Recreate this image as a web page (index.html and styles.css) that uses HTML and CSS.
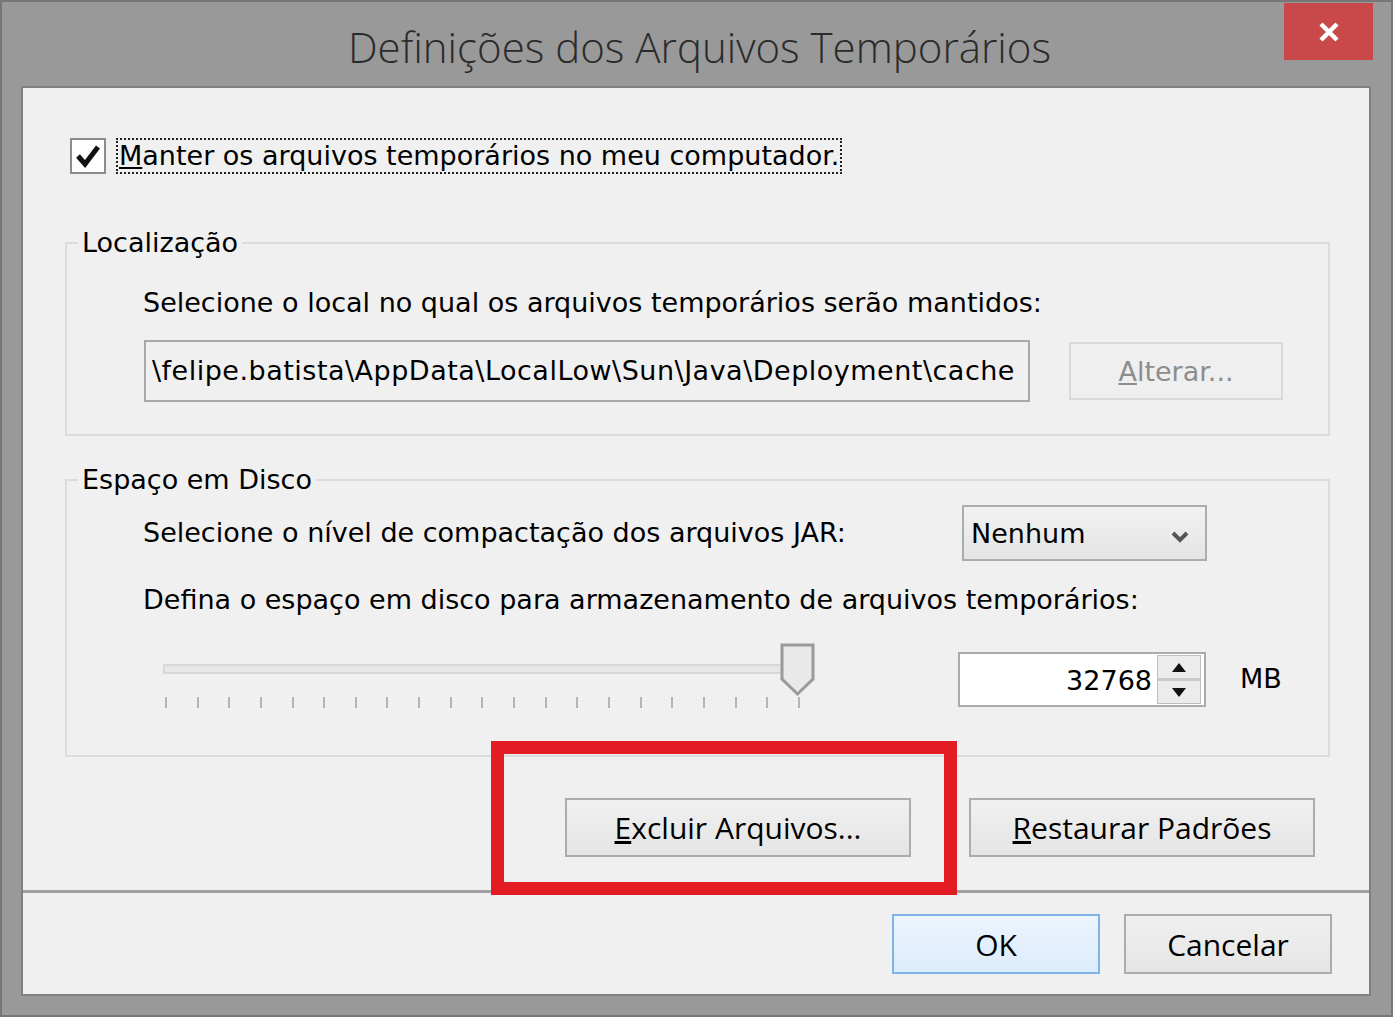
FILE: index.html
```html
<!DOCTYPE html>
<html lang="pt">
  <head>
    <meta charset="UTF-8" />
    <title>Definições dos Arquivos Temporários</title>
    <link rel="stylesheet" href="styles.css">
  </head>
  <body>
    <div class="window">
      <div class="titlebar">
        <span class="title">Definições dos Arquivos Temporários</span>
        <div class="close">
          <svg width="26" height="24" viewBox="0 0 26 24">
            <path d="M5 4 L21 20 M21 4 L5 20" stroke="#fff" stroke-width="4.5" />
          </svg>
        </div>
      </div>

      <div class="client">
        <div class="content">
          <div class="check-row">
            <span class="checkbox">
              <svg width="28" height="28" viewBox="0 0 28 28">
                <path d="M4 14 L11 22 L24 5" fill="none" stroke="#111" stroke-width="5" />
              </svg>
            </span>
            <span class="check-label"><u>M</u>anter os arquivos temporários no meu computador.</span>
          </div>

          <fieldset class="group group-location">
            <legend>Localização</legend>
            <p class="line">Selecione o local no qual os arquivos temporários serão mantidos:</p>
            <div class="path-row">
              <div class="path-box">\felipe.batista\AppData\LocalLow\Sun\Java\Deployment\cache</div>
              <div class="btn btn-disabled"><u>A</u>lterar...</div>
            </div>
          </fieldset>

          <fieldset class="group group-disk">
            <legend>Espaço em Disco</legend>
            <div class="jar-row">
              <span class="line">Selecione o nível de compactação dos arquivos JAR:</span>
              <div class="combo">
                <span>Nenhum</span>
                <svg width="22" height="16" viewBox="0 0 22 16">
                  <path d="M4 5 L11 12 L18 5" fill="none" stroke="#555" stroke-width="4" />
                </svg>
              </div>
            </div>
            <p class="line line-space">Defina o espaço em disco para armazenamento de arquivos temporários:</p>
            <div class="slider-row">
              <div class="slider">
                <div class="track"></div>
                <svg class="thumb" width="35" height="54" viewBox="0 0 35 54">
                  <path d="M2 2 H33 V36 L17.5 51 L2 36 Z" fill="#e9e9e9" stroke="#9a9a9a" stroke-width="3" />
                </svg>
                <div class="ticks">
                  <i></i><i></i><i></i><i></i><i></i><i></i><i></i>
                  <i></i><i></i><i></i><i></i><i></i><i></i><i></i>
                  <i></i><i></i><i></i><i></i><i></i><i></i><i></i>
                </div>
              </div>
              <div class="spin">
                <span class="spin-value">32768</span>
                <div class="spin-buttons">
                  <div class="spin-up">
                    <svg width="14" height="9" viewBox="0 0 14 9"><path d="M7 0 L14 9 H0 Z" fill="#111" /></svg>
                  </div>
                  <div class="spin-down">
                    <svg width="14" height="9" viewBox="0 0 14 9"><path d="M0 0 H14 L7 9 Z" fill="#111" /></svg>
                  </div>
                </div>
              </div>
              <span class="unit">MB</span>
            </div>
          </fieldset>

          <div class="action-row">
            <div class="btn btn-wide"><u>E</u>xcluir Arquivos...</div>
            <div class="btn btn-wide"><u>R</u>estaurar Padrões</div>
          </div>
        </div>

        <div class="footer">
          <div class="btn btn-footer btn-default">OK</div>
          <div class="btn btn-footer">Cancelar</div>
        </div>

        <div class="highlight"></div>
      </div>
    </div>
  </body>
</html>
```

FILE: styles.css
```css
body {
  margin: 0;
  background: #fff;
  font-family: "DejaVu Sans", Verdana, sans-serif;
  font-size: 27px;
  color: #000;
}

.window {
  width: 1389px;
  height: 1013px;
  background: #999;
  border: 2px solid #777;
}

.titlebar {
  height: 84px;
  position: relative;
  display: flex;
  justify-content: center;
  align-items: center;
}

.title {
  font-family: "Open Sans", sans-serif;
  font-weight: 300;
  font-size: 42px;
  color: #2b2b2b;
  margin-top: 4px;
  margin-left: 6px;
}

.close {
  position: absolute;
  top: 1px;
  right: 18px;
  width: 89px;
  height: 57px;
  background: #c9484a;
  display: flex;
  justify-content: center;
  align-items: center;
}

.client {
  position: relative;
  margin-left: 19px;
  width: 1346px;
  height: 906px;
  background: #f0f0f0;
  border: 2px solid #808080;
}

.content {
  height: 802px;
  padding: 0 39px 0 42px;
  box-sizing: border-box;
  overflow: hidden;
}

.check-row {
  display: flex;
  align-items: center;
  gap: 11px;
  margin: 50px 0 0 5px;
  height: 36px;
}

.checkbox {
  width: 32px;
  height: 32px;
  background: #fff;
  border: 2px solid #8c8c8c;
  display: flex;
  justify-content: center;
  align-items: center;
}

.check-label {
  line-height: 34px;
  padding: 0 2px;
  outline: 2px dotted #222;
  outline-offset: -1px;
}

.group {
  margin: 0;
  padding: 0;
  border: 2px solid #dcdcdc;
  min-width: 0;
}

.group legend {
  margin-left: 11px;
  padding: 0 4px;
  line-height: 32px;
}

.line {
  margin: 0;
  line-height: 32px;
}

.group-location {
  margin-top: 53px;
  padding-bottom: 32px;
}

.group-location .line {
  margin: 28px 0 0 76px;
}

.path-row {
  display: flex;
  align-items: center;
  gap: 39px;
  margin: 21px 0 0 77px;
}

.path-box {
  width: 876px;
  height: 58px;
  border: 2px solid #a9a9a9;
  background: #f0f0f0;
  line-height: 58px;
  padding-left: 6px;
  letter-spacing: 0.5px;
  overflow: hidden;
  white-space: nowrap;
}

.btn {
  display: flex;
  justify-content: center;
  align-items: center;
  box-sizing: border-box;
  border: 2px solid #acacac;
  background: linear-gradient(#f0f0f0, #e5e5e5);
  font-family: "Open Sans", sans-serif;
  font-size: 30px;
}

.btn-disabled {
  width: 214px;
  height: 58px;
  border-color: #d9d9d9;
  background: #efefef;
  color: #8d8d8d;
  font-family: "DejaVu Sans", sans-serif;
  font-size: 27px;
}

.group-disk {
  margin-top: 28px;
  padding-bottom: 46px;
}

.jar-row {
  display: flex;
  align-items: center;
  justify-content: space-between;
  margin: 9px 121px 0 76px;
}

.combo {
  width: 245px;
  height: 56px;
  box-sizing: border-box;
  border: 2px solid #acacac;
  background: linear-gradient(#f2f2f2, #e4e4e4);
  display: flex;
  align-items: center;
  justify-content: space-between;
  padding: 0 14px 0 7px;
}

.combo svg {
  margin-top: 6px;
}

.line-space {
  margin: 23px 0 0 76px;
}

.slider-row {
  display: flex;
  align-items: flex-start;
  margin: 27px 0 0 96px;
  height: 66px;
}

.slider {
  position: relative;
  width: 652px;
  height: 66px;
}

.track {
  position: absolute;
  left: 0;
  top: 21px;
  width: 622px;
  height: 6px;
  border: 2px solid #d8d8d8;
  background: #e8e8e8;
}

.thumb {
  position: absolute;
  left: 617px;
  top: 0;
}

.ticks {
  position: absolute;
  left: 2px;
  top: 54px;
  width: 635px;
  display: flex;
  justify-content: space-between;
}

.ticks i {
  width: 2px;
  height: 11px;
  background: #b4b4b4;
}

.spin {
  margin: 9px 0 0 143px;
  width: 248px;
  height: 55px;
  box-sizing: border-box;
  border: 2px solid #ababab;
  background: #fff;
  display: flex;
  justify-content: flex-end;
  align-items: stretch;
  padding: 1px 3px 1px 0;
}

.spin-value {
  line-height: 51px;
  margin-right: 5px;
}

.spin-buttons {
  width: 42px;
  display: flex;
  flex-direction: column;
  border: 1px solid #bdbdbd;
}

.spin-up,
.spin-down {
  flex: 1;
  display: flex;
  justify-content: center;
  align-items: center;
  background: #ececec;
}

.spin-up {
  border-bottom: 3px solid #c9c9c9;
}

.unit {
  margin: 36px 0 0 34px;
  line-height: 0;
}

.action-row {
  display: flex;
  justify-content: flex-end;
  gap: 58px;
  margin: 41px 15px 0 0;
}

.btn-wide {
  width: 346px;
  height: 59px;
}

.footer {
  height: 104px;
  border-top: 3px solid #a0a0a0;
  box-sizing: border-box;
  display: flex;
  justify-content: flex-end;
  gap: 24px;
  padding: 21px 37px 0 0;
}

.btn-footer {
  width: 208px;
  height: 60px;
}

.btn-default {
  border-color: #7eb4ea;
  background: linear-gradient(#ecf4fc, #dcecfc);
}

.highlight {
  position: absolute;
  left: 468px;
  top: 653px;
  width: 440px;
  height: 128px;
  border: 13px solid #e31b25;
}
```
